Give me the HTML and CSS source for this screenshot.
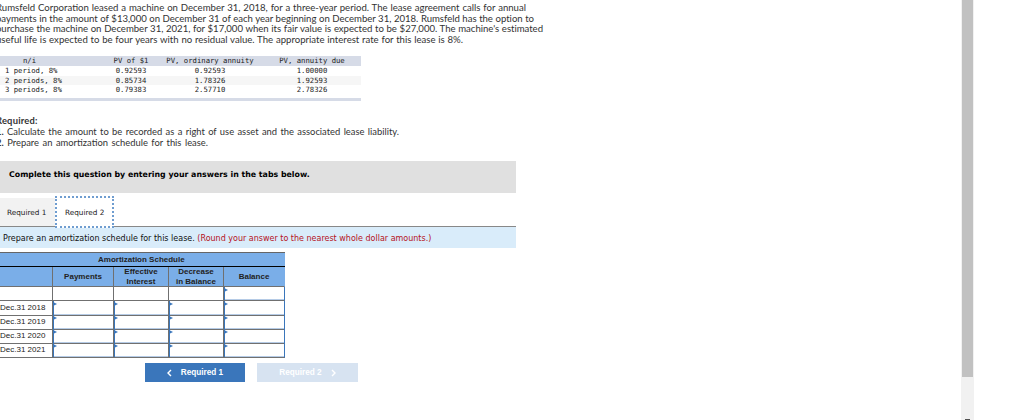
FILE: index.html
```
<!DOCTYPE html>
<html lang="en">
<head>
    <meta charset="UTF-8">
    <meta name="viewport" content="width=device-width, initial-scale=1.0">
    <title>Lease Amortization</title>
    <link rel="stylesheet" href="styles.css">
</head>
<body>
    <div class="page">
        <div class="content">
            <div class="problem">
                <p class="l1">Rumsfeld Corporation leased a machine on December 31, 2018, for a three-year period. The lease agreement calls for annual</p>
                <p class="l2">payments in the amount of $13,000 on December 31 of each year beginning on December 31, 2018. Rumsfeld has the option to</p>
                <p class="l3">purchase the machine on December 31, 2021, for $17,000 when its fair value is expected to be $27,000. The machine's estimated</p>
                <p class="l4">useful life is expected to be four years with no residual value. The appropriate interest rate for this lease is 8%.</p>
            </div>

            <div class="pv-table">
                <div class="pv-row pv-head"><span>n/i</span><span>PV of $1</span><span>PV, ordinary annuity</span><span>PV, annuity due</span></div>
                <div class="pv-row"><span>1 period, 8%</span><span>0.92593</span><span>0.92593</span><span>1.00000</span></div>
                <div class="pv-row striped"><span>2 periods, 8%</span><span>0.85734</span><span>1.78326</span><span>1.92593</span></div>
                <div class="pv-row"><span>3 periods, 8%</span><span>0.79383</span><span>2.57710</span><span>2.78326</span></div>
            </div>

            <div class="required">
                <p class="r1"><b>Required:</b></p>
                <p class="r2"><b>1.</b> Calculate the amount to be recorded as a right of use asset and the associated lease liability.</p>
                <p class="r3"><b>2.</b> Prepare an amortization schedule for this lease.</p>
            </div>

            <div class="banner"><span>Complete this question by entering your answers in the tabs below.</span></div>

            <div class="tabs">
                <div class="tab"><span>Required 1</span></div>
                <div class="tab active"><span>Required 2</span></div>
            </div>

            <div class="prompt"><span class="ask">Prepare an amortization schedule for this lease.</span> <span class="hint">(Round your answer to the nearest whole dollar amounts.)</span></div>

            <div class="schedule">
                <div class="title"><span>Amortization Schedule</span></div>
                <div class="row head">
                    <div></div>
                    <div>Payments</div>
                    <div>Effective<br>Interest</div>
                    <div>Decrease<br>in Balance</div>
                    <div>Balance</div>
                </div>
                <div class="row first"><div></div><div></div><div></div><div></div><div class="entry"></div></div>
                <div class="row"><div class="date">Dec.31 2018</div><div class="entry"></div><div class="entry"></div><div class="entry"></div><div class="entry"></div></div>
                <div class="row"><div class="date">Dec.31 2019</div><div class="entry"></div><div class="entry"></div><div class="entry"></div><div class="entry"></div></div>
                <div class="row"><div class="date">Dec.31 2020</div><div class="entry"></div><div class="entry"></div><div class="entry"></div><div class="entry"></div></div>
                <div class="row"><div class="date">Dec.31 2021</div><div class="entry"></div><div class="entry"></div><div class="entry"></div><div class="entry"></div></div>
            </div>

            <div class="nav">
                <div class="btn">
                    <svg width="5" height="8" viewBox="0 0 5 8"><path d="M4 1L1 4L4 7"/></svg>
                    <span>Required 1</span>
                </div>
                <div class="btn disabled">
                    <span>Required 2</span>
                    <svg width="5" height="8" viewBox="0 0 5 8"><path d="M1 1L4 4L1 7"/></svg>
                </div>
            </div>
        </div>

        <div class="scrollbar">
            <div class="thumb"></div>
            <div class="arrow"></div>
        </div>
    </div>
</body>
</html>
```
FILE: styles.css
```
* {
    margin: 0;
    padding: 0;
    box-sizing: border-box;
}

body {
    background: #fff;
    color: #222;
    font-family: "Liberation Sans", Arial, sans-serif;
    overflow: hidden;
}

.page {
    display: flex;
    width: 1024px;
    height: 420px;
    overflow: hidden;
}

.content {
    width: 961px;
    flex: none;
    white-space: nowrap;
    overflow: hidden;
}

.problem {
    height: 56px;
    padding-top: 3px;
}

.problem p,
.required p {
    margin-left: -4px;
    font-family: Lato, sans-serif;
    font-size: 9.6px;
    line-height: 10.7px;
    color: #333;
    text-align-last: justify;
}

.problem .l1 { width: 530px; }
.problem .l2 { width: 538px; letter-spacing: -0.03px; }
.problem .l3 { width: 547px; letter-spacing: -0.03px; }
.problem .l4 { width: 467px; }

.pv-table {
    width: 361px;
    height: 45px;
    border-bottom: 3px solid #d6dbe7;
    font-family: "DejaVu Sans Mono", monospace;
    font-size: 7.25px;
    color: #222;
}

.pv-row {
    display: grid;
    grid-template-columns: 99px 64px 94px 110px;
    height: 9.5px;
    line-height: 10px;
    text-align: center;
    overflow: hidden;
}

.pv-row span:first-child {
    padding-left: 5px;
    text-align: left;
}

.pv-head {
    height: 10px;
    background: #d6dbe7;
}

.pv-head span:first-child {
    padding-left: 23px;
}

.striped {
    background: #f6f6f6;
}

.required {
    height: 60px;
    padding-top: 14px;
}

.required p {
    font-size: 9.4px;
    line-height: 11px;
}

.required .r1 { width: 42px; }
.required .r2 { width: 403px; }
.required .r3 { width: 212px; }

.required .r1 {
    letter-spacing: 0.2px;
}

.banner {
    width: 515.5px;
    height: 32px;
    padding-left: 9px;
    background: #e0e0e0;
    font-family: "DejaVu Sans", sans-serif;
    font-size: 7.85px;
    font-weight: bold;
    line-height: 28px;
    color: #000;
}

.tabs {
    display: flex;
    align-items: flex-end;
    width: 515.5px;
    height: 34px;
    border-bottom: 1px solid #888;
    font-family: "DejaVu Sans", sans-serif;
    font-size: 7.3px;
    color: #222;
}

.tab {
    width: 55px;
    height: 28px;
    padding-left: 7px;
    background: #f2f2f2;
    line-height: 29.5px;
}

.tab.active {
    width: 59px;
    height: 32px;
    margin-bottom: -2px;
    padding-left: 8px;
    border: 2px dotted #6f9dd0;
    background: #fff;
    line-height: 29px;
}

.prompt {
    width: 515.5px;
    height: 21px;
    padding-left: 3px;
    background: #d9ecfa;
    font-family: "DejaVu Sans", sans-serif;
    font-size: 8px;
    line-height: 23px;
    color: #111;
}

.hint {
    color: #b5121b;
}

.schedule {
    width: 285px;
    margin-top: 4px;
    border-top: 1px solid #666;
    font-size: 8px;
}

.title {
    height: 14px;
    padding-left: 98px;
    border-bottom: 1px solid #000;
    background: #7aaee8;
    font-weight: bold;
    line-height: 13px;
}

.row {
    display: grid;
    grid-template-columns: 53px 61px 55px 55px 61px;
    height: 14px;
}

.row > div {
    border-right: 1px solid #707070;
    border-bottom: 1px solid #707070;
}

.row > div:last-child {
    border-right: 1px solid #3a76bb;
}

.row.head {
    height: 20px;
    background: #7aaee8;
    font-weight: bold;
    line-height: 9.5px;
    text-align: center;
}

.head > div {
    display: flex;
    align-items: center;
    justify-content: center;
}

.row.head > div:last-child {
    border-right-color: #7aaee8;
}

.date {
    line-height: 14px;
}

.entry {
    position: relative;
    box-shadow: inset 1px 0 #3a76bb, inset 0 -1px #b5cbe6;
}

.entry::before {
    content: "";
    position: absolute;
    left: 0;
    top: 1px;
    border: 2px solid transparent;
    border-left: 4px solid #3a76bb;
}

.nav {
    display: flex;
    gap: 12px;
    margin-top: 6px;
    padding-left: 145px;
}

.btn {
    display: flex;
    align-items: center;
    justify-content: center;
    gap: 9px;
    width: 100px;
    height: 19px;
    background: #3a76bb;
    color: #fff;
    font-size: 8.2px;
    font-weight: bold;
}

.btn.disabled {
    width: 101px;
    background: #d7e3f1;
}

.btn svg {
    fill: none;
    stroke: #fff;
    stroke-width: 1.4;
}

.scrollbar {
    display: flex;
    flex-direction: column;
    justify-content: space-between;
    align-items: center;
    width: 13px;
    background: #f1f1f1;
}

.thumb {
    width: 11px;
    height: 377px;
    background: #c1c1c1;
}

.arrow {
    width: 5px;
    height: 1px;
    background: #505050;
}
```
